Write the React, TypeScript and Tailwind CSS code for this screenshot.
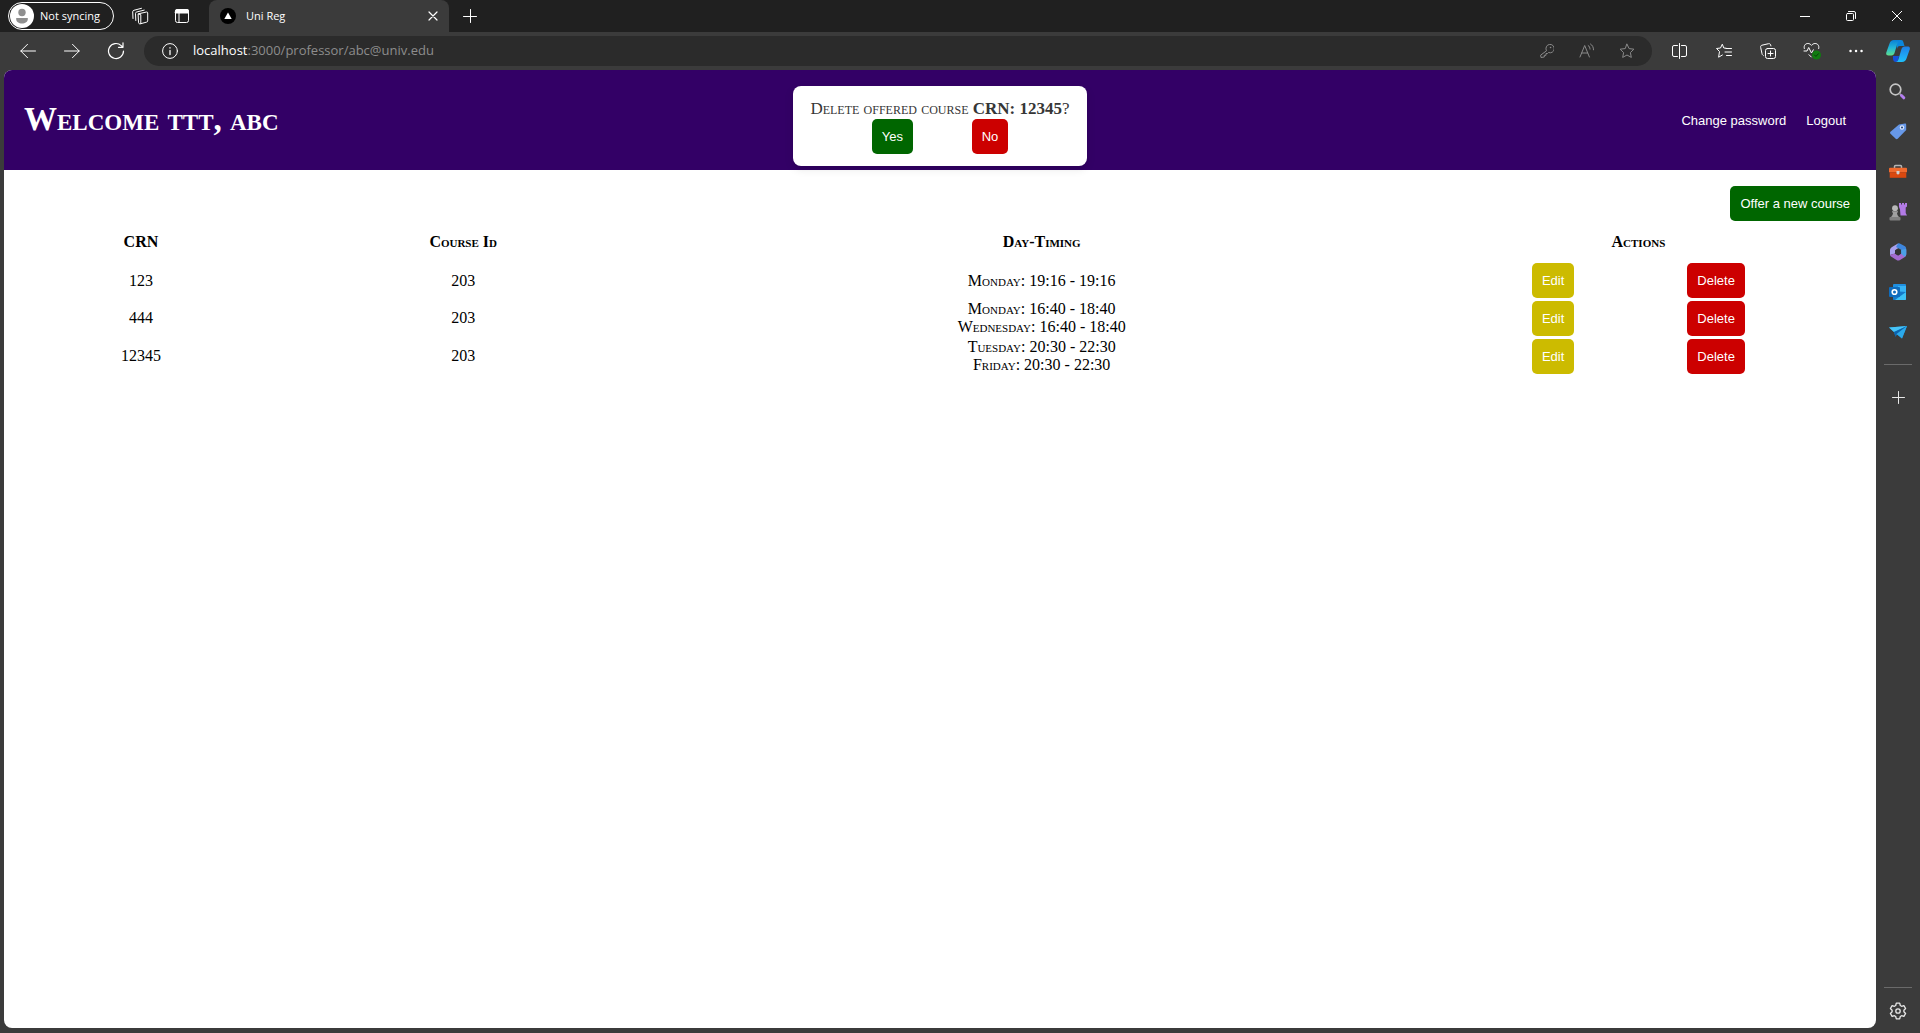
import React from "react";

type IconProps = { children: React.ReactNode; size?: number; className?: string };

function Icon({ children, size = 16, className = "" }: IconProps) {
  return (
    <svg
      width={size}
      height={size}
      viewBox={`0 0 ${size} ${size}`}
      fill="none"
      stroke="currentColor"
      strokeLinecap="round"
      strokeLinejoin="round"
      className={`shrink-0 ${className}`}
      aria-hidden="true"
    >
      {children}
    </svg>
  );
}

function ChromeButton({ label, className, children }: { label: string; className: string; children: React.ReactNode }) {
  return (
    <button type="button" aria-label={label} className={`flex shrink-0 items-center justify-center ${className}`}>
      {children}
    </button>
  );
}

const STAR = "M8 1.2l2.1 4.4 4.8.6-3.5 3.4.9 4.8L8 12l-4.3 2.4.9-4.8L1.1 6.2l4.8-.6z";

function TitleBar() {
  return (
    <div className="flex h-8 items-center bg-[#202020] text-white">
      <button
        type="button"
        className="ml-2 flex h-7 w-[106px] items-center gap-[6px] rounded-full border border-white pl-px"
      >
        <Icon size={24}>
          <circle cx="12" cy="12" r="12" fill="#fff" stroke="none" />
          <circle cx="12" cy="8.5" r="3.7" fill="#8f8f8f" stroke="none" />
          <path d="M6.2 14h11.6v1c0 2.800-2.600 4.500-5.800 4.500s-5.800-1.700-5.800-4.500z" fill="#8f8f8f" stroke="none" />
        </Icon>
        <span className="whitespace-nowrap text-[11px]">Not syncing</span>
      </button>
      <ChromeButton label="Workspaces" className="ml-[5px] h-8 w-[42px]">
        <Icon size={18}>
          <path d="M7.500 6.800l8-1.800c.7-.1 1.200.2 1.200.9v8c0 .6-.4 1.100-1 1.200l-6.400 1.700c-1 .2-1.800-.2-1.800-1.200z" />
          <path d="M7.500 7l2.300.700v9M4.800 13.500l-.3-7c0-.8.4-1.300 1.200-1.500l7.500-1.900M2 11.500l-.3-6.700c0-.8.4-1.300 1.200-1.500L10.500 1.300" />
        </Icon>
      </ChromeButton>
      <ChromeButton label="Tab actions" className="h-8 w-[42px]">
        <Icon size={16}>
          <rect x="1.500" y="1.500" width="13" height="13" rx="2" />
          <path d="M1.500 2.500a1 1 0 0 1 1-1h11a1 1 0 0 1 1 1V5h-13z" fill="currentColor" />
          <path d="M5 5v9.500" />
        </Icon>
      </ChromeButton>
      <div className="ml-[6px] flex h-8 w-60 items-center rounded-t-lg bg-[#3b3b3b] pl-[11px] pr-1">
        <Icon size={16}>
          <circle cx="8" cy="8" r="8" fill="#000" stroke="none" />
          <path d="M8 4.500l3.700 6.500H4.300z" fill="#fff" stroke="none" />
        </Icon>
        <span className="ml-[10px] flex-1 text-[11px]">Uni Reg</span>
        <ChromeButton label="Close tab" className="size-6">
          <Icon size={10}>
            <path d="M1 1l8 8M9 1l-8 8" strokeWidth="1.200" />
          </Icon>
        </ChromeButton>
      </div>
      <ChromeButton label="New tab" className="ml-[5px] h-8 w-8">
        <Icon size={14}>
          <path d="M7.500 .5v13M.5 7.500h13" strokeWidth="1" />
        </Icon>
      </ChromeButton>
      <div className="ml-auto flex">
        <ChromeButton label="Minimize" className="h-8 w-[46px]">
          <Icon size={10}>
            <path d="M0 5.500h10" />
          </Icon>
        </ChromeButton>
        <ChromeButton label="Restore" className="h-8 w-[46px]">
          <Icon size={10}>
            <rect x=".5" y="2.500" width="7" height="7" rx="1" />
            <path d="M2.500.5H8a1.500 1.500 0 0 1 1.500 1.500v5.500" />
          </Icon>
        </ChromeButton>
        <ChromeButton label="Close" className="h-8 w-[46px]">
          <Icon size={10}>
            <path d="M.3.3l9.400 9.400M9.700.3L.3 9.700" />
          </Icon>
        </ChromeButton>
      </div>
    </div>
  );
}

function CopilotLogo() {
  return (
    <svg width="24" height="22" viewBox="0 0 24 22" aria-hidden="true">
      <defs>
        <linearGradient id="cpa" x1="0" y1="0" x2="0" y2="1">
          <stop offset="0" stopColor="#0a7fd6" />
          <stop offset=".5" stopColor="#22b5d8" />
          <stop offset="1" stopColor="#5fe08c" />
        </linearGradient>
        <linearGradient id="cpb" x1="0" y1="0" x2="0" y2="1">
          <stop offset="0" stopColor="#1e7fe8" />
          <stop offset="1" stopColor="#1fc0fb" />
        </linearGradient>
      </defs>
      <path d="M7 16h6l-1 4c-.4 1.400-1 2-2 2-2 0-2.600-1-3-3z" fill="#1650d8" />
      <path d="M10 0h5c1.500 0 2 .8 2.500 2.500L18.500 6H14c-2 0-2.500 1-3 3z" fill="#0b86dd" />
      <path d="M3.500 3.500C4.200 1.300 5.600 0 8 0h6c-1.500.5-2 1.500-2.500 3L8.500 13c-.5 1.500-1.500 2.500-3 2.500H2.500C.5 15.500-.2 14.500.3 12.500z" fill="url(#cpa)" />
      <path d="M20.500 18.500c-.7 2.200-2.100 3.500-4.500 3.500h-6c1.500-.5 2-1.500 2.500-3l3-10c.5-1.500 1.500-2.500 3-2.500h3c2 0 2.700 1 2.200 3z" fill="url(#cpb)" />
    </svg>
  );
}

function Toolbar() {
  return (
    <div className="flex h-[38px] items-center bg-[#3b3b3b] pl-[6px] pr-[2px] text-white">
      <ChromeButton label="Back" className="h-8 w-11">
        <Icon>
          <path d="M15.500 8H.8M7.500 1.300L.8 8l6.700 6.700" />
        </Icon>
      </ChromeButton>
      <ChromeButton label="Forward" className="h-8 w-11">
        <Icon>
          <path d="M.5 8h14.700M8.500 1.300L15.200 8l-6.700 6.700" />
        </Icon>
      </ChromeButton>
      <ChromeButton label="Refresh" className="h-8 w-11">
        <Icon size={18}>
          <path d="M16.500 9a7.500 7.500 0 1 1-2.300-5.400l1.800 1.700M16 .8v4.500h-4.500" strokeWidth="1.200" />
        </Icon>
      </ChromeButton>
      <div className="mx-[6px] flex h-[30px] min-w-0 flex-1 items-center rounded-full bg-[#2b2b2b] pl-[18px] pr-[5px]">
        <Icon>
          <circle cx="8" cy="8" r="7.400" />
          <path d="M8 7.500v4M8 4.700v.3" strokeWidth="1.300" />
        </Icon>
        <div role="textbox" aria-label="Address" className="ml-[15px] flex-1 truncate text-[13px] text-[#8d8d8d]">
          <span className="text-white">localhost</span>:3000/professor/abc@univ.edu
        </div>
        <div className="flex text-[#8a8a8a]">
          <ChromeButton label="Saved passwords" className="h-7 w-10">
            <Icon size={14}>
              <path d="M6.300 6.500A4.200 4.200 0 1 1 8.500 8.500l-1 1H6v1.800H4.300V13L1 13.500.7 11.500z" />
              <path d="M10.500 3.500h.1" strokeWidth="1.500" />
            </Icon>
          </ChromeButton>
          <ChromeButton label="Read aloud" className="h-7 w-10">
            <Icon>
              <path d="M1 14L5.700 2.500 10.400 14M2.700 10h6M9.200 2.500c1.200.8 1.800 2 1.800 3.600M11.500 1c2 1.300 3 3.200 3 5.800" />
            </Icon>
          </ChromeButton>
          <ChromeButton label="Add to favorites" className="h-7 w-10">
            <Icon>
              <path d={STAR} />
            </Icon>
          </ChromeButton>
        </div>
      </div>
      <ChromeButton label="Split screen" className="h-8 w-11">
        <Icon>
          <path d="M5.500 2.500H2A1.500 1.500 0 0 0 .5 4v8A1.500 1.500 0 0 0 2 13.500h3.500M9.500 2.500H13A1.500 1.500 0 0 1 14.500 4v8a1.500 1.500 0 0 1-1.500 1.500H9.500M7.500.5v15" />
        </Icon>
      </ChromeButton>
      <ChromeButton label="Favorites" className="h-8 w-11">
        <Icon>
          <path d="M10 5.200L7.800 5 6.300 1.200 4.500 5l-4 .5 3 3-.9 5.700 3.800-2.200M10 5.500h5.500M9 9h6.500M10.500 12.500h5" />
        </Icon>
      </ChromeButton>
      <ChromeButton label="Collections" className="h-8 w-11">
        <Icon>
          <rect x="5.500" y="5.500" width="10" height="10" rx="2" />
          <path d="M10.500 8v5M8 10.500h5M3.300 12.500C2.500 12 2.200 11.500 2 10.700L.7 4.500C.4 3.200.9 2.400 2 2.200L8.500.7c1.100-.2 1.900.2 2.200 1.300l.2.900" />
        </Icon>
      </ChromeButton>
      <ChromeButton label="Browser essentials" className="h-8 w-11">
        <Icon size={18}>
          <path d="M8.300 15L6 12.700M1.300 6.500C.5 3.500 2.500 1.500 4.800 1.500c1.500 0 2.700.6 3.700 1.900 1-1.300 2.200-1.900 3.700-1.900 2.300 0 4.300 2 3.500 5M1 9h3l1.700-3.500L8.500 11l1.800-3.200" />
          <circle cx="13.500" cy="13" r="4.500" fill="#107c10" stroke="none" />
          <path d="M11.500 13l1.400 1.400 2.600-2.700" stroke="#0b3d0b" />
        </Icon>
      </ChromeButton>
      <ChromeButton label="Settings and more" className="h-8 w-11">
        <Icon>
          <path d="M2.500 8h.1M8 8h.1M13.500 8h.1" strokeWidth="2.400" />
        </Icon>
      </ChromeButton>
      <ChromeButton label="Copilot" className="h-8 w-10">
        <CopilotLogo />
      </ChromeButton>
    </div>
  );
}

const SIDEBAR_APPS: { label: string; art: React.ReactNode }[] = [
  {
    label: "Search",
    art: (
      <>
        <circle cx="6.500" cy="6.500" r="5.300" stroke="#c4c4c4" strokeWidth="1.700" />
        <path d="M10.700 10.700l1 1" stroke="#9a9a9a" strokeWidth="1.700" />
        <path d="M12.500 12.500l2.300 2.300" stroke="#b47ff0" strokeWidth="3" />
      </>
    ),
  },
  {
    label: "Shopping",
    art: (
      <>
        <path d="M10 1.500L16 .5c.8 0 1.200.4 1.200 1.200V7L8.700 15.800c-.7.6-1.300.6-2 0L1.500 10.700c-.6-.7-.6-1.300 0-2z" fill="#6798e8" stroke="none" />
        <circle cx="13" cy="4.500" r="2.200" fill="#dfeaff" stroke="none" />
        <circle cx="13" cy="4.500" r="1.100" fill="#2b4c86" stroke="none" />
      </>
    ),
  },
  {
    label: "Tools",
    art: (
      <>
        <path d="M5.500 5V3.500c0-.7.400-1 1-1h5c.6 0 1 .3 1 1V5" stroke="#b5b5b5" strokeWidth="1.500" />
        <path d="M1 4.800h16c.6 0 1 .3 1 .9v3.500H0V5.700c0-.6.4-.9 1-.9z" fill="#f06a2e" stroke="none" />
        <path d="M.7 9.200h16.600v5.600H.7z" fill="#d9480f" stroke="none" />
        <path d="M7.500 8h3v2.500L9 11.800l-1.500-1.300z" fill="#cfcfcf" stroke="none" />
      </>
    ),
  },
  {
    label: "Games",
    art: (
      <>
        <path d="M10 0h2v1.500h1V0h2v1.500h1V0h2v3.500l-1.300 1V10l1.300 2.500h-6.500l-.5-6-1-2.500z" fill="#b27be6" stroke="none" />
        <circle cx="6" cy="5.200" r="2.900" fill="#b8b8b8" stroke="none" />
        <path d="M3 8.200h6v1.300H8c0 2 .7 3 2 4.500H2C3.300 12.500 4 11.500 4 9.500H3z" fill="#a0a0a0" stroke="none" />
        <rect x=".5" y="14" width="11" height="3.500" rx="1" fill="#808080" stroke="none" />
      </>
    ),
  },
  {
    label: "Microsoft 365",
    art: (
      <>
        <path d="M9 .5L3 4C1.700 4.800 1 5.800 1 7.300V12l5-1.500V7.300L11 4z" fill="#a9a0ee" stroke="none" />
        <path d="M9 .5c1-.5 1.500-.3 2.300.2L15.500 3c1.200.8 1.700 1.600 1.700 3v6l-5-2.500V6.800L7 4z" fill="#3e86dd" stroke="none" />
        <path d="M17.200 7v4.200c0 1.500-.5 2.300-1.700 3L11 17c-1.300.7-2.300.7-3.500 0l-4.300-2.700C2 13.500 1.300 13 1 12l5-1.500 3.200 2 3-2z" fill="#a46bd0" stroke="none" />
        <path d="M17.200 6v5c0 1-.5 2-1.700 2.800l-3.300-3.300V6.800z" fill="#4ba0e6" stroke="none" />
        <path d="M9 5.700l3 1.800v3.300L9 12.600l-3-1.800V7.500z" fill="#343434" stroke="none" />
      </>
    ),
  },
  {
    label: "Outlook",
    art: (
      <>
        <rect x="4" y="1" width="13" height="8" rx="1" fill="#1f8fe0" stroke="none" />
        <path d="M9 3h8v7H9z" fill="#37b3f5" stroke="none" />
        <path d="M4 8l13 1v7c0 .6-.4 1-1 1H5c-.6 0-1-.4-1-1z" fill="#1479c9" stroke="none" />
        <path d="M17 9v7c0 .6-.4 1-1 1H6z" fill="#3cc1f6" stroke="none" />
        <rect x="0" y="4" width="11" height="10" rx="1" fill="#0f6cbd" stroke="none" />
        <circle cx="5.500" cy="9" r="2.300" stroke="#fff" strokeWidth="1.600" />
      </>
    ),
  },
  {
    label: "Drop",
    art: (
      <>
        <path d="M0 4.500l18-1.500-5 12.500-5-4-1.500 2L5 9z" fill="#1b8fd6" stroke="none" />
        <path d="M0 4.500L18 3 5 9z" fill="#47c4f7" stroke="none" />
        <path d="M18 3L5 9l1.500 5L7.700 11z" fill="#0d63ad" stroke="none" />
        <path d="M18 3L7.700 11l5.300 4.500z" fill="#2ba9ea" stroke="none" />
      </>
    ),
  },
];

const GEAR =
  "M7.300 1.200h3.400l.6 2.300 1.300.8 2.300-.7 1.700 2.900-1.700 1.700v1.600l1.700 1.700-1.700 2.900-2.300-.7-1.300.8-.6 2.300H7.300l-.6-2.300-1.300-.8-2.300.7-1.700-2.900 1.700-1.700V8.200L1.400 6.500l1.700-2.900 2.300.7 1.300-.8z";

function Sidebar() {
  return (
    <aside className="flex w-11 shrink-0 flex-col items-center pt-[2px] text-[#e8e8e8]">
      <nav aria-label="Browser sidebar" className="flex flex-col items-center">
        {SIDEBAR_APPS.map((app) => (
          <ChromeButton key={app.label} label={app.label} className="h-10 w-11">
            <Icon size={18}>{app.art}</Icon>
          </ChromeButton>
        ))}
        <div className="my-3 h-px w-7 bg-[#6a6a6a]" />
        <ChromeButton label="Customize" className="h-10 w-11">
          <Icon size={13}>
            <path d="M6.500 .5v12M.5 6.500h12" />
          </Icon>
        </ChromeButton>
      </nav>
      <div className="mt-auto flex flex-col items-center">
        <div className="h-px w-7 bg-[#6a6a6a]" />
        <ChromeButton label="Settings" className="h-[45px] w-11">
          <Icon size={18}>
            <path d={GEAR} strokeWidth="1.300" />
            <circle cx="9" cy="9" r="2.200" strokeWidth="1.300" />
          </Icon>
        </ChromeButton>
      </div>
    </aside>
  );
}

const ACTION =
  "rounded-[5px] p-[10px] text-[13px] leading-[15px] text-white font-['Liberation_Sans',Arial,sans-serif] whitespace-nowrap [font-variant-caps:normal]";

function DeleteDialog() {
  return (
    <div
      role="alertdialog"
      aria-label="Confirm deletion"
      className="absolute left-1/2 top-4 w-[294px] -translate-x-1/2 rounded-lg bg-white p-3 text-center text-[#363636] shadow-[0_3px_10px_rgba(0,0,0,0.1),0_3px_3px_rgba(0,0,0,0.05)]"
    >
      <p className="whitespace-nowrap text-[17px] leading-[21px]">
        Delete offered course <b>CRN: 12345</b>?
      </p>
      <div className="flex justify-evenly px-2">
        <button type="button" className={`${ACTION} bg-[#006600]`}>
          Yes
        </button>
        <button type="button" className={`${ACTION} bg-[#cc0000]`}>
          No
        </button>
      </div>
    </div>
  );
}

const COURSES = [
  { crn: "123", course: "203", times: ["Monday: 19:16 - 19:16"] },
  { crn: "444", course: "203", times: ["Monday: 16:40 - 18:40", "Wednesday: 16:40 - 18:40"] },
  { crn: "12345", course: "203", times: ["Tuesday: 20:30 - 22:30", "Friday: 20:30 - 22:30"] },
];

function CourseTable() {
  return (
    <table className="w-full table-fixed border-separate border-spacing-[2px] text-center leading-[18px]">
      <colgroup>
        <col className="w-[13%]" />
        <col className="w-[22%]" />
        <col />
        <col className="w-[24%]" />
      </colgroup>
      <thead>
        <tr>
          <th className="py-[10px]">CRN</th>
          <th className="py-[10px]">Course Id</th>
          <th className="py-[10px]">Day-Timing</th>
          <th className="py-[10px]">Actions</th>
        </tr>
      </thead>
      <tbody>
        {COURSES.map((c) => (
          <tr key={c.crn}>
            <td>{c.crn}</td>
            <td>{c.course}</td>
            <td>
              {c.times.map((t) => (
                <div key={t}>{t}</div>
              ))}
            </td>
            <td>
              <div className="flex justify-evenly">
                <button type="button" className={`${ACTION} bg-[#ccbb00]`}>
                  Edit
                </button>
                <button type="button" className={`${ACTION} bg-[#cc0000]`}>
                  Delete
                </button>
              </div>
            </td>
          </tr>
        ))}
      </tbody>
    </table>
  );
}

export default function App() {
  return (
    <div className="flex min-h-screen flex-col bg-[#3b3b3b] font-['Open_Sans','Noto_Sans',sans-serif]">
      <TitleBar />
      <Toolbar />
      <div className="flex flex-1">
        <main className="relative mb-[5px] ml-1 flex-1 overflow-hidden rounded-lg bg-white font-['Liberation_Serif','Times_New_Roman',serif] text-base text-black [font-variant-caps:small-caps]">
          <header className="flex h-[100px] items-center justify-between bg-[#330066] px-5 text-white">
            <h1 className="text-[33px] font-bold">Welcome ttt, abc</h1>
            <nav className="flex">
              <button type="button" className={ACTION}>
                Change password
              </button>
              <button type="button" className={ACTION}>
                Logout
              </button>
            </nav>
          </header>
          <section className="px-4 pt-4">
            <div className="flex justify-end">
              <button type="button" className={`${ACTION} bg-[#006600]`}>
                Offer a new course
              </button>
            </div>
            <CourseTable />
          </section>
          <DeleteDialog />
        </main>
        <Sidebar />
      </div>
    </div>
  );
}
